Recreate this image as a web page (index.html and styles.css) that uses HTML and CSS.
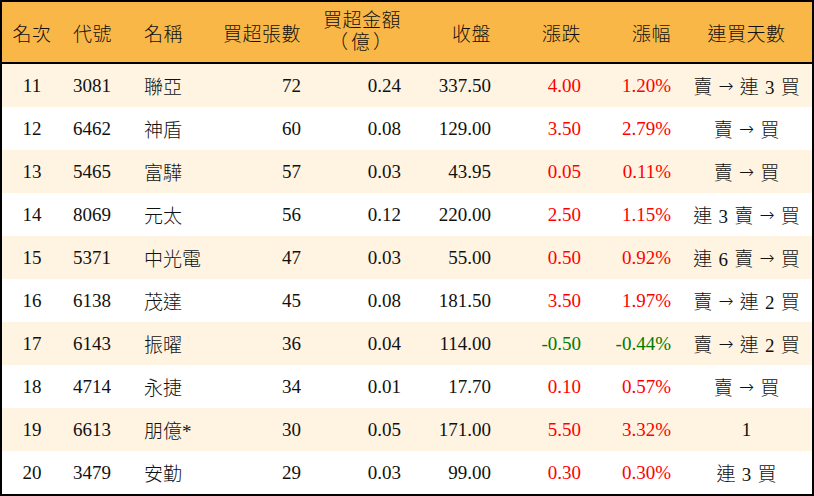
FILE: index.html
```html
<!DOCTYPE html>
<html lang="zh-Hant">
<head>
<meta charset="utf-8">
<title>買超排行</title>
<link rel="stylesheet" href="styles.css">
</head>
<body>
<div class="table">
  <div class="row head">
    <div class="c c1">名次</div>
    <div class="c c2">代號</div>
    <div class="c c3">名稱</div>
    <div class="c r">買超張數</div>
    <div class="c r two"><span>買超金額</span><span class="sub">（億）</span></div>
    <div class="c r">收盤</div>
    <div class="c r">漲跌</div>
    <div class="c r">漲幅</div>
    <div class="c c9">連買天數</div>
  </div>
  <div class="row alt"><div class="c c1">11</div><div class="c c2">3081</div><div class="c c3">聯亞</div><div class="c r">72</div><div class="c r">0.24</div><div class="c r">337.50</div><div class="c r up">4.00</div><div class="c r up">1.20%</div><div class="c c9">賣 <span class="arr">→</span> 連 3 買</div></div>
  <div class="row"><div class="c c1">12</div><div class="c c2">6462</div><div class="c c3">神盾</div><div class="c r">60</div><div class="c r">0.08</div><div class="c r">129.00</div><div class="c r up">3.50</div><div class="c r up">2.79%</div><div class="c c9">賣 <span class="arr">→</span> 買</div></div>
  <div class="row alt"><div class="c c1">13</div><div class="c c2">5465</div><div class="c c3">富驊</div><div class="c r">57</div><div class="c r">0.03</div><div class="c r">43.95</div><div class="c r up">0.05</div><div class="c r up">0.11%</div><div class="c c9">賣 <span class="arr">→</span> 買</div></div>
  <div class="row"><div class="c c1">14</div><div class="c c2">8069</div><div class="c c3">元太</div><div class="c r">56</div><div class="c r">0.12</div><div class="c r">220.00</div><div class="c r up">2.50</div><div class="c r up">1.15%</div><div class="c c9">連 3 賣 <span class="arr">→</span> 買</div></div>
  <div class="row alt"><div class="c c1">15</div><div class="c c2">5371</div><div class="c c3">中光電</div><div class="c r">47</div><div class="c r">0.03</div><div class="c r">55.00</div><div class="c r up">0.50</div><div class="c r up">0.92%</div><div class="c c9">連 6 賣 <span class="arr">→</span> 買</div></div>
  <div class="row"><div class="c c1">16</div><div class="c c2">6138</div><div class="c c3">茂達</div><div class="c r">45</div><div class="c r">0.08</div><div class="c r">181.50</div><div class="c r up">3.50</div><div class="c r up">1.97%</div><div class="c c9">賣 <span class="arr">→</span> 連 2 買</div></div>
  <div class="row alt"><div class="c c1">17</div><div class="c c2">6143</div><div class="c c3">振曜</div><div class="c r">36</div><div class="c r">0.04</div><div class="c r">114.00</div><div class="c r down">-0.50</div><div class="c r down">-0.44%</div><div class="c c9">賣 <span class="arr">→</span> 連 2 買</div></div>
  <div class="row"><div class="c c1">18</div><div class="c c2">4714</div><div class="c c3">永捷</div><div class="c r">34</div><div class="c r">0.01</div><div class="c r">17.70</div><div class="c r up">0.10</div><div class="c r up">0.57%</div><div class="c c9">賣 <span class="arr">→</span> 買</div></div>
  <div class="row alt"><div class="c c1">19</div><div class="c c2">6613</div><div class="c c3">朋億*</div><div class="c r">30</div><div class="c r">0.05</div><div class="c r">171.00</div><div class="c r up">5.50</div><div class="c r up">3.32%</div><div class="c c9">1</div></div>
  <div class="row"><div class="c c1">20</div><div class="c c2">3479</div><div class="c c3">安勤</div><div class="c r">29</div><div class="c r">0.03</div><div class="c r">99.00</div><div class="c r up">0.30</div><div class="c r up">0.30%</div><div class="c c9">連 3 買</div></div>
</div>
</body>
</html>
```

FILE: styles.css
```css
html, body {
  margin: 0;
  padding: 0;
  background: #ffffff;
}

.table {
  width: 814px;
  height: 496px;
  box-sizing: border-box;
  border: 2px solid #000;
  font-family: "Liberation Serif", "Noto Sans CJK TC", serif;
  font-size: 19px;
  font-weight: 300;
  color: #111;
  display: flex;
  flex-direction: column;
}

.row {
  display: grid;
  grid-template-columns: 60px 72px 77px 100px 100px 90px 90px 90px 131px;
  height: 43px;
  background: #ffffff;
}

.row.alt {
  background: #fef4e1;
}

.row.head {
  height: 60px;
  background: #f9b747;
  border-bottom: 2px solid #000;
}

.row.head .c {
  letter-spacing: 0.5px;
}

.c {
  display: flex;
  align-items: center;
  white-space: pre;
}

.c1 {
  justify-content: center;
}

.c2 {
  padding-left: 11px;
}

.c3 {
  padding-left: 10px;
}

.r {
  justify-content: flex-end;
  padding-right: 10px;
}

.c9 {
  justify-content: center;
  word-spacing: 1.5px;
}

.arr {
  font-family: "DejaVu Sans", sans-serif;
  font-size: 18px;
}

.two {
  flex-direction: column;
  align-items: flex-end;
  justify-content: center;
  line-height: 22px;
}

.row.head .two .sub {
  letter-spacing: 3px;
  margin-right: 6px;
}

.up {
  color: #ff0000;
}

.down {
  color: #007a00;
}
```
